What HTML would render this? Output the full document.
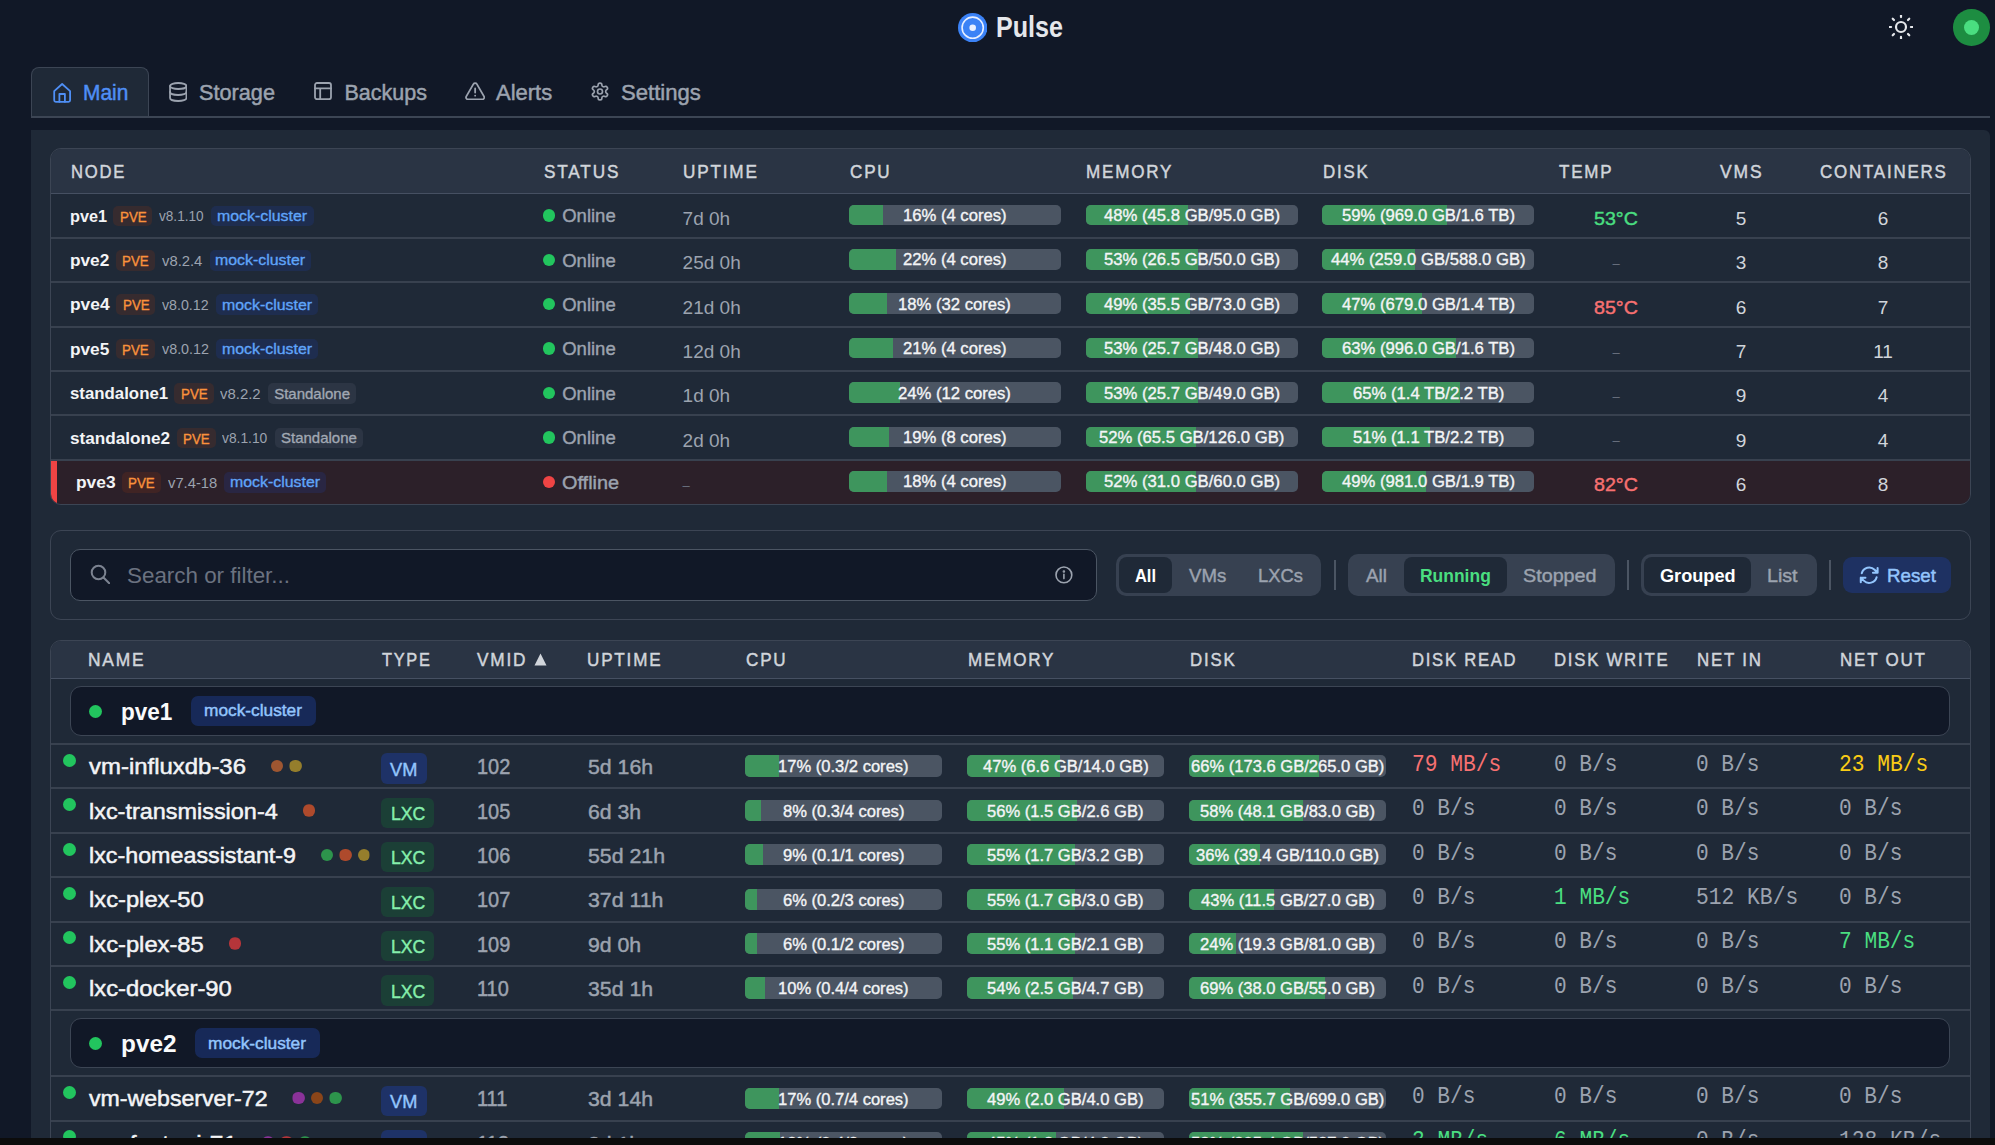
<!DOCTYPE html><html><head><meta charset="utf-8"><style>
html,body{margin:0;padding:0;}body{width:1995px;height:1145px;overflow:hidden;background:#111827;position:relative;font-family:'Liberation Sans', sans-serif;}
.a{position:absolute;}.t{position:absolute;white-space:pre;}
</style></head><body>
<svg class="a" style="left:958.00px;top:13.00px;" width="29.40" height="29.40" viewBox="0 0 29.4 29.4"><circle cx="14.7" cy="14.7" r="14.7" fill="#3b82f6"/><circle cx="14.7" cy="14.7" r="10.6" fill="none" stroke="#e8efff" stroke-width="1.6"/><circle cx="14.7" cy="14.7" r="3.3" fill="#e8efff"/></svg>
<div class="t" style="left:996.00px;top:12.00px;font-size:30px;line-height:30px;color:#e5e7eb;font-weight:bold;font-family:'Liberation Sans', sans-serif;transform:scaleX(0.8371);transform-origin:0 0;">Pulse</div>
<svg class="a" style="left:1888.70px;top:15.30px;" width="24.00" height="24.00" viewBox="0 0 24 24"><g stroke="#e5e7eb" stroke-width="2.2" stroke-linecap="round" fill="none"><circle cx="12" cy="12" r="5"/><line x1="21.90" y1="12.00" x2="23.70" y2="12.00"/><line x1="19.00" y1="19.00" x2="20.27" y2="20.27"/><line x1="12.00" y1="21.90" x2="12.00" y2="23.70"/><line x1="5.00" y1="19.00" x2="3.73" y2="20.27"/><line x1="2.10" y1="12.00" x2="0.30" y2="12.00"/><line x1="5.00" y1="5.00" x2="3.73" y2="3.73"/><line x1="12.00" y1="2.10" x2="12.00" y2="0.30"/><line x1="19.00" y1="5.00" x2="20.27" y2="3.73"/></g></svg>
<div class="a" style="left:1953.05px;top:8.85px;width:36.70px;height:36.70px;border-radius:50%;background:#1d8d41;"></div>
<div class="a" style="left:1963.80px;top:19.60px;width:15.20px;height:15.20px;border-radius:50%;background:#4ade80;"></div>
<div class="a" style="left:31.4px;top:67.4px;width:117.4px;height:50px;background:#1f2937;border:1.5px solid #3c4554;border-bottom:none;border-radius:8px 8px 0 0;box-sizing:border-box;"></div>
<div class="a" style="left:31.40px;top:116.00px;width:1958.40px;height:1.50px;background:#3c4554;"></div>
<div class="a" style="left:31px;top:130px;width:1959px;height:1010px;background:#1f2937;border-radius:0 6px 0 0;"></div>
<svg class="a" style="left:52.80px;top:83.10px;" width="18.30" height="19.90" viewBox="0 0 18.3 19.9"><g fill="none" stroke-width="1.8" stroke-linecap="round" stroke-linejoin="round" stroke="#4f8ff5"><path d="M1.2 8.2 L9.15 1 L17.1 8.2 V17.2 a1.6 1.6 0 0 1 -1.6 1.6 H2.8 a1.6 1.6 0 0 1 -1.6 -1.6 Z"/><path d="M6.4 18.8 V11 H11.9 V18.8"/></g></svg>
<div class="t" style="left:83.13px;top:83.00px;font-size:21.5px;line-height:21.5px;color:#4f8ff5;font-weight:normal;font-family:'Liberation Sans', sans-serif;-webkit-text-stroke:0.47px #4f8ff5;transform:scaleX(0.9706);transform-origin:0 0;">Main</div>
<svg class="a" style="left:168.80px;top:81.70px;" width="18.50" height="20.00" viewBox="0 0 18.5 20"><g fill="none" stroke-width="1.8" stroke-linecap="round" stroke-linejoin="round" stroke="#9ca3af"><ellipse cx="9.25" cy="4" rx="8.2" ry="3"/><path d="M1.05 4 V16 c0 1.7 3.7 3 8.2 3 s8.2 -1.3 8.2 -3 V4"/><path d="M1.05 10 c0 1.7 3.7 3 8.2 3 s8.2 -1.3 8.2 -3"/></g></svg>
<div class="t" style="left:199.14px;top:83.00px;font-size:21.5px;line-height:21.5px;color:#9ca3af;font-weight:normal;font-family:'Liberation Sans', sans-serif;-webkit-text-stroke:0.47px #9ca3af;transform:scaleX(1.0084);transform-origin:0 0;">Storage</div>
<svg class="a" style="left:313.90px;top:82.30px;" width="18.00" height="18.20" viewBox="0 0 18 18.2"><g fill="none" stroke-width="1.8" stroke-linecap="round" stroke-linejoin="round" stroke="#9ca3af"><rect x="1" y="1" width="16" height="16.2" rx="2"/><path d="M1 6.3 H17 M6.2 6.3 V17.2"/></g></svg>
<div class="t" style="left:344.53px;top:83.00px;font-size:21.5px;line-height:21.5px;color:#9ca3af;font-weight:normal;font-family:'Liberation Sans', sans-serif;-webkit-text-stroke:0.47px #9ca3af;">Backups</div>
<svg class="a" style="left:464.70px;top:82.30px;" width="20.30" height="18.20" viewBox="0 0 20.3 18.2"><g fill="none" stroke-width="1.8" stroke-linecap="round" stroke-linejoin="round" stroke="#9ca3af"><path d="M8.4 2.1 a2 2 0 0 1 3.5 0 L19 14.4 a2 2 0 0 1 -1.75 3 H3.05 a2 2 0 0 1 -1.75 -3 Z"/><path d="M10.15 6.5 V10.6 M10.15 13.6 V13.7"/></g></svg>
<div class="t" style="left:495.84px;top:83.00px;font-size:21.5px;line-height:21.5px;color:#9ca3af;font-weight:normal;font-family:'Liberation Sans', sans-serif;-webkit-text-stroke:0.47px #9ca3af;transform:scaleX(1.0230);transform-origin:0 0;">Alerts</div>
<svg class="a" style="left:590.40px;top:80.70px;" width="20.00" height="21.00" viewBox="0 0 24 24"><g fill="none" stroke="#9ca3af" stroke-width="2" stroke-linecap="round" stroke-linejoin="round"><path d="M12.22 2h-.44a2 2 0 0 0-2 2v.18a2 2 0 0 1-1 1.73l-.43.25a2 2 0 0 1-2 0l-.15-.08a2 2 0 0 0-2.73.73l-.22.38a2 2 0 0 0 .73 2.73l.15.1a2 2 0 0 1 1 1.72v.51a2 2 0 0 1-1 1.74l-.15.09a2 2 0 0 0-.73 2.73l.22.38a2 2 0 0 0 2.73.73l.15-.08a2 2 0 0 1 2 0l.43.25a2 2 0 0 1 1 1.73V20a2 2 0 0 0 2 2h.44a2 2 0 0 0 2-2v-.18a2 2 0 0 1 1-1.73l.43-.25a2 2 0 0 1 2 0l.15.08a2 2 0 0 0 2.73-.73l.22-.39a2 2 0 0 0-.73-2.73l-.15-.08a2 2 0 0 1-1-1.74v-.5a2 2 0 0 1 1-1.74l.15-.09a2 2 0 0 0 .73-2.73l-.22-.38a2 2 0 0 0-2.73-.73l-.15.08a2 2 0 0 1-2 0l-.43-.25a2 2 0 0 1-1-1.73V4a2 2 0 0 0-2-2z"/><circle cx="12" cy="12" r="3"/></g></svg>
<div class="t" style="left:621.34px;top:83.00px;font-size:21.5px;line-height:21.5px;color:#9ca3af;font-weight:normal;font-family:'Liberation Sans', sans-serif;-webkit-text-stroke:0.47px #9ca3af;transform:scaleX(1.0275);transform-origin:0 0;">Settings</div>
<div class="a" style="left:50px;top:148.3px;width:1921px;height:356.8px;border:1.5px solid #3c4554;border-radius:11px;box-sizing:border-box;overflow:hidden;background:#1f2937;"><div style="position:absolute;left:0;top:0;right:0;height:43.5px;background:#2a3444;border-bottom:1.5px solid #465062;"></div><div style="position:absolute;left:0;top:309.9px;right:0;bottom:0;background:#2c2029;"></div><div style="position:absolute;left:0;top:309.9px;width:6px;bottom:0;background:#ef4444;"></div></div>
<div class="a" style="left:51.00px;top:236.70px;width:1919.00px;height:2.00px;background:#38414f;"></div>
<div class="a" style="left:51.00px;top:281.10px;width:1919.00px;height:2.00px;background:#38414f;"></div>
<div class="a" style="left:51.00px;top:325.50px;width:1919.00px;height:2.00px;background:#38414f;"></div>
<div class="a" style="left:51.00px;top:369.90px;width:1919.00px;height:2.00px;background:#38414f;"></div>
<div class="a" style="left:51.00px;top:414.30px;width:1919.00px;height:2.00px;background:#38414f;"></div>
<div class="a" style="left:51.00px;top:458.70px;width:1919.00px;height:2.00px;background:#38414f;"></div>
<div class="t" style="left:70.81px;top:162.00px;font-size:19px;line-height:19px;color:#d1d5db;font-weight:normal;font-family:'Liberation Sans', sans-serif;letter-spacing:2.0px;-webkit-text-stroke:0.49px #d1d5db;transform:scaleX(0.8749);transform-origin:0 0;">NODE</div>
<div class="t" style="left:543.72px;top:162.00px;font-size:19px;line-height:19px;color:#d1d5db;font-weight:normal;font-family:'Liberation Sans', sans-serif;letter-spacing:2.0px;-webkit-text-stroke:0.49px #d1d5db;transform:scaleX(0.9054);transform-origin:0 0;">STATUS</div>
<div class="t" style="left:682.62px;top:162.00px;font-size:19px;line-height:19px;color:#d1d5db;font-weight:normal;font-family:'Liberation Sans', sans-serif;letter-spacing:2.0px;-webkit-text-stroke:0.49px #d1d5db;transform:scaleX(0.9031);transform-origin:0 0;">UPTIME</div>
<div class="t" style="left:849.52px;top:162.00px;font-size:19px;line-height:19px;color:#d1d5db;font-weight:normal;font-family:'Liberation Sans', sans-serif;letter-spacing:2.0px;-webkit-text-stroke:0.49px #d1d5db;transform:scaleX(0.8991);transform-origin:0 0;">CPU</div>
<div class="t" style="left:1086.22px;top:162.00px;font-size:19px;line-height:19px;color:#d1d5db;font-weight:normal;font-family:'Liberation Sans', sans-serif;letter-spacing:2.0px;-webkit-text-stroke:0.49px #d1d5db;transform:scaleX(0.8981);transform-origin:0 0;">MEMORY</div>
<div class="t" style="left:1322.72px;top:162.00px;font-size:19px;line-height:19px;color:#d1d5db;font-weight:normal;font-family:'Liberation Sans', sans-serif;letter-spacing:2.0px;-webkit-text-stroke:0.49px #d1d5db;transform:scaleX(0.8911);transform-origin:0 0;">DISK</div>
<div class="t" style="left:1559.22px;top:162.00px;font-size:19px;line-height:19px;color:#d1d5db;font-weight:normal;font-family:'Liberation Sans', sans-serif;letter-spacing:2.0px;-webkit-text-stroke:0.49px #d1d5db;transform:scaleX(0.8942);transform-origin:0 0;">TEMP</div>
<div class="t" style="left:1719.73px;top:162.00px;font-size:19px;line-height:19px;color:#d1d5db;font-weight:normal;font-family:'Liberation Sans', sans-serif;letter-spacing:2.0px;-webkit-text-stroke:0.49px #d1d5db;transform:scaleX(0.9198);transform-origin:0 0;">VMS</div>
<div class="t" style="left:1819.62px;top:162.00px;font-size:19px;line-height:19px;color:#d1d5db;font-weight:normal;font-family:'Liberation Sans', sans-serif;letter-spacing:2.0px;-webkit-text-stroke:0.49px #d1d5db;transform:scaleX(0.8916);transform-origin:0 0;">CONTAINERS</div>
<div class="t" style="left:69.60px;top:208.00px;font-size:16.5px;line-height:16.5px;color:#f3f4f6;font-weight:bold;font-family:'Liberation Sans', sans-serif;transform:scaleX(0.9840);transform-origin:0 0;">pve1</div>
<div class="a" style="left:113.30px;top:205.50px;width:39.20px;height:20.70px;background:rgba(154,52,18,0.19);border-radius:5px;"></div>
<div class="t" style="left:119.57px;top:210.00px;font-size:14px;line-height:14px;color:#fb923c;font-weight:normal;font-family:'Liberation Sans', sans-serif;-webkit-text-stroke:0.36px #fb923c;transform:scaleX(0.9516);transform-origin:0 0;">PVE</div>
<div class="t" style="left:159.30px;top:209.00px;font-size:14.5px;line-height:14.5px;color:#9ca3af;font-weight:normal;font-family:'Liberation Sans', sans-serif;transform:scaleX(0.9378);transform-origin:0 0;">v8.1.10</div>
<div class="a" style="left:211.30px;top:205.50px;width:102.40px;height:20.70px;background:rgba(30,64,175,0.2);border-radius:5px;"></div>
<div class="t" style="left:217.47px;top:208.00px;font-size:15px;line-height:15px;color:#60a5fa;font-weight:normal;font-family:'Liberation Sans', sans-serif;-webkit-text-stroke:0.33px #60a5fa;transform:scaleX(1.0592);transform-origin:0 0;">mock-cluster</div>
<div class="a" style="left:542.85px;top:209.15px;width:12.50px;height:12.50px;border-radius:50%;background:#22c55e;"></div>
<div class="t" style="left:562.21px;top:207.00px;font-size:18.5px;line-height:18.5px;color:#9ca3af;font-weight:normal;font-family:'Liberation Sans', sans-serif;-webkit-text-stroke:0.41px #9ca3af;">Online</div>
<div class="t" style="left:682.60px;top:209.00px;font-size:19px;line-height:19px;color:#9ca3af;font-weight:normal;font-family:'Liberation Sans', sans-serif;">7d 0h</div>
<div class="a" style="left:849.00px;top:204.50px;width:211.80px;height:20.70px;background:#4b5563;border-radius:5px;overflow:hidden;"><div style="width:16%;height:100%;background:#3e955d;"></div></div>
<div class="t" style="left:903.08px;top:208.00px;font-size:16px;line-height:16px;color:#f3f4f6;font-weight:normal;font-family:'Liberation Sans', sans-serif;-webkit-text-stroke:0.35px #f3f4f6;transform:scaleX(1.0405);transform-origin:0 0;">16% (4 cores)</div>
<div class="a" style="left:1086.00px;top:204.50px;width:211.60px;height:20.70px;background:#4b5563;border-radius:5px;overflow:hidden;"><div style="width:48%;height:100%;background:#3e955d;"></div></div>
<div class="t" style="left:1103.76px;top:208.00px;font-size:16px;line-height:16px;color:#f3f4f6;font-weight:normal;font-family:'Liberation Sans', sans-serif;-webkit-text-stroke:0.35px #f3f4f6;transform:scaleX(1.0420);transform-origin:0 0;">48% (45.8 GB/95.0 GB)</div>
<div class="a" style="left:1322.40px;top:204.50px;width:211.60px;height:20.70px;background:#4b5563;border-radius:5px;overflow:hidden;"><div style="width:59%;height:100%;background:#3e955d;"></div></div>
<div class="t" style="left:1341.71px;top:208.00px;font-size:16px;line-height:16px;color:#f3f4f6;font-weight:normal;font-family:'Liberation Sans', sans-serif;-webkit-text-stroke:0.35px #f3f4f6;transform:scaleX(1.0420);transform-origin:0 0;">59% (969.0 GB/1.6 TB)</div>
<div class="t" style="left:1594.07px;top:209.00px;font-size:19px;line-height:19px;color:#4ade80;font-weight:normal;font-family:'Liberation Sans', sans-serif;-webkit-text-stroke:0.42px #4ade80;transform:scaleX(1.0335);transform-origin:0 0;">53°C</div>
<div class="t" style="left:1735.72px;top:209.00px;font-size:19px;line-height:19px;color:#d1d5db;font-weight:normal;font-family:'Liberation Sans', sans-serif;">5</div>
<div class="t" style="left:1877.72px;top:209.00px;font-size:19px;line-height:19px;color:#d1d5db;font-weight:normal;font-family:'Liberation Sans', sans-serif;">6</div>
<div class="t" style="left:69.60px;top:252.00px;font-size:16.5px;line-height:16.5px;color:#f3f4f6;font-weight:bold;font-family:'Liberation Sans', sans-serif;transform:scaleX(1.0451);transform-origin:0 0;">pve2</div>
<div class="a" style="left:115.60px;top:249.90px;width:39.20px;height:20.70px;background:rgba(154,52,18,0.19);border-radius:5px;"></div>
<div class="t" style="left:121.87px;top:254.00px;font-size:14px;line-height:14px;color:#fb923c;font-weight:normal;font-family:'Liberation Sans', sans-serif;-webkit-text-stroke:0.36px #fb923c;transform:scaleX(0.9516);transform-origin:0 0;">PVE</div>
<div class="t" style="left:161.60px;top:254.00px;font-size:14.5px;line-height:14.5px;color:#9ca3af;font-weight:normal;font-family:'Liberation Sans', sans-serif;transform:scaleX(1.0203);transform-origin:0 0;">v8.2.4</div>
<div class="a" style="left:209.60px;top:249.90px;width:101.80px;height:20.70px;background:rgba(30,64,175,0.2);border-radius:5px;"></div>
<div class="t" style="left:215.47px;top:252.00px;font-size:15px;line-height:15px;color:#60a5fa;font-weight:normal;font-family:'Liberation Sans', sans-serif;-webkit-text-stroke:0.33px #60a5fa;transform:scaleX(1.0592);transform-origin:0 0;">mock-cluster</div>
<div class="a" style="left:542.85px;top:253.55px;width:12.50px;height:12.50px;border-radius:50%;background:#22c55e;"></div>
<div class="t" style="left:562.21px;top:252.00px;font-size:18.5px;line-height:18.5px;color:#9ca3af;font-weight:normal;font-family:'Liberation Sans', sans-serif;-webkit-text-stroke:0.41px #9ca3af;">Online</div>
<div class="t" style="left:682.60px;top:253.00px;font-size:19px;line-height:19px;color:#9ca3af;font-weight:normal;font-family:'Liberation Sans', sans-serif;">25d 0h</div>
<div class="a" style="left:849.00px;top:248.90px;width:211.80px;height:20.70px;background:#4b5563;border-radius:5px;overflow:hidden;"><div style="width:22%;height:100%;background:#3e955d;"></div></div>
<div class="t" style="left:903.08px;top:252.00px;font-size:16px;line-height:16px;color:#f3f4f6;font-weight:normal;font-family:'Liberation Sans', sans-serif;-webkit-text-stroke:0.35px #f3f4f6;transform:scaleX(1.0405);transform-origin:0 0;">22% (4 cores)</div>
<div class="a" style="left:1086.00px;top:248.90px;width:211.60px;height:20.70px;background:#4b5563;border-radius:5px;overflow:hidden;"><div style="width:53%;height:100%;background:#3e955d;"></div></div>
<div class="t" style="left:1103.76px;top:252.00px;font-size:16px;line-height:16px;color:#f3f4f6;font-weight:normal;font-family:'Liberation Sans', sans-serif;-webkit-text-stroke:0.35px #f3f4f6;transform:scaleX(1.0420);transform-origin:0 0;">53% (26.5 GB/50.0 GB)</div>
<div class="a" style="left:1322.40px;top:248.90px;width:211.60px;height:20.70px;background:#4b5563;border-radius:5px;overflow:hidden;"><div style="width:44%;height:100%;background:#3e955d;"></div></div>
<div class="t" style="left:1330.87px;top:252.00px;font-size:16px;line-height:16px;color:#f3f4f6;font-weight:normal;font-family:'Liberation Sans', sans-serif;-webkit-text-stroke:0.35px #f3f4f6;transform:scaleX(1.0422);transform-origin:0 0;">44% (259.0 GB/588.0 GB)</div>
<div class="t" style="left:1612.39px;top:257.00px;font-size:13px;line-height:13px;color:#6b7280;font-weight:normal;font-family:'Liberation Sans', sans-serif;">–</div>
<div class="t" style="left:1735.72px;top:253.00px;font-size:19px;line-height:19px;color:#d1d5db;font-weight:normal;font-family:'Liberation Sans', sans-serif;">3</div>
<div class="t" style="left:1877.72px;top:253.00px;font-size:19px;line-height:19px;color:#d1d5db;font-weight:normal;font-family:'Liberation Sans', sans-serif;">8</div>
<div class="t" style="left:69.60px;top:296.00px;font-size:16.5px;line-height:16.5px;color:#f3f4f6;font-weight:bold;font-family:'Liberation Sans', sans-serif;transform:scaleX(1.0531);transform-origin:0 0;">pve4</div>
<div class="a" style="left:116.30px;top:294.30px;width:39.20px;height:20.70px;background:rgba(154,52,18,0.19);border-radius:5px;"></div>
<div class="t" style="left:122.57px;top:298.00px;font-size:14px;line-height:14px;color:#fb923c;font-weight:normal;font-family:'Liberation Sans', sans-serif;-webkit-text-stroke:0.36px #fb923c;transform:scaleX(0.9516);transform-origin:0 0;">PVE</div>
<div class="t" style="left:162.00px;top:298.00px;font-size:14.5px;line-height:14.5px;color:#9ca3af;font-weight:normal;font-family:'Liberation Sans', sans-serif;transform:scaleX(0.9798);transform-origin:0 0;">v8.0.12</div>
<div class="a" style="left:215.70px;top:294.30px;width:102.40px;height:20.70px;background:rgba(30,64,175,0.2);border-radius:5px;"></div>
<div class="t" style="left:221.87px;top:297.00px;font-size:15px;line-height:15px;color:#60a5fa;font-weight:normal;font-family:'Liberation Sans', sans-serif;-webkit-text-stroke:0.33px #60a5fa;transform:scaleX(1.0592);transform-origin:0 0;">mock-cluster</div>
<div class="a" style="left:542.85px;top:297.95px;width:12.50px;height:12.50px;border-radius:50%;background:#22c55e;"></div>
<div class="t" style="left:562.21px;top:296.00px;font-size:18.5px;line-height:18.5px;color:#9ca3af;font-weight:normal;font-family:'Liberation Sans', sans-serif;-webkit-text-stroke:0.41px #9ca3af;">Online</div>
<div class="t" style="left:682.60px;top:298.00px;font-size:19px;line-height:19px;color:#9ca3af;font-weight:normal;font-family:'Liberation Sans', sans-serif;">21d 0h</div>
<div class="a" style="left:849.00px;top:293.30px;width:211.80px;height:20.70px;background:#4b5563;border-radius:5px;overflow:hidden;"><div style="width:18%;height:100%;background:#3e955d;"></div></div>
<div class="t" style="left:898.44px;top:297.00px;font-size:16px;line-height:16px;color:#f3f4f6;font-weight:normal;font-family:'Liberation Sans', sans-serif;-webkit-text-stroke:0.35px #f3f4f6;transform:scaleX(1.0408);transform-origin:0 0;">18% (32 cores)</div>
<div class="a" style="left:1086.00px;top:293.30px;width:211.60px;height:20.70px;background:#4b5563;border-radius:5px;overflow:hidden;"><div style="width:49%;height:100%;background:#3e955d;"></div></div>
<div class="t" style="left:1103.76px;top:297.00px;font-size:16px;line-height:16px;color:#f3f4f6;font-weight:normal;font-family:'Liberation Sans', sans-serif;-webkit-text-stroke:0.35px #f3f4f6;transform:scaleX(1.0420);transform-origin:0 0;">49% (35.5 GB/73.0 GB)</div>
<div class="a" style="left:1322.40px;top:293.30px;width:211.60px;height:20.70px;background:#4b5563;border-radius:5px;overflow:hidden;"><div style="width:47%;height:100%;background:#3e955d;"></div></div>
<div class="t" style="left:1341.71px;top:297.00px;font-size:16px;line-height:16px;color:#f3f4f6;font-weight:normal;font-family:'Liberation Sans', sans-serif;-webkit-text-stroke:0.35px #f3f4f6;transform:scaleX(1.0420);transform-origin:0 0;">47% (679.0 GB/1.4 TB)</div>
<div class="t" style="left:1594.07px;top:298.00px;font-size:19px;line-height:19px;color:#f87171;font-weight:normal;font-family:'Liberation Sans', sans-serif;-webkit-text-stroke:0.42px #f87171;transform:scaleX(1.0335);transform-origin:0 0;">85°C</div>
<div class="t" style="left:1735.72px;top:298.00px;font-size:19px;line-height:19px;color:#d1d5db;font-weight:normal;font-family:'Liberation Sans', sans-serif;">6</div>
<div class="t" style="left:1877.72px;top:298.00px;font-size:19px;line-height:19px;color:#d1d5db;font-weight:normal;font-family:'Liberation Sans', sans-serif;">7</div>
<div class="t" style="left:69.60px;top:341.00px;font-size:16.5px;line-height:16.5px;color:#f3f4f6;font-weight:bold;font-family:'Liberation Sans', sans-serif;transform:scaleX(1.0451);transform-origin:0 0;">pve5</div>
<div class="a" style="left:115.60px;top:338.70px;width:39.20px;height:20.70px;background:rgba(154,52,18,0.19);border-radius:5px;"></div>
<div class="t" style="left:121.87px;top:343.00px;font-size:14px;line-height:14px;color:#fb923c;font-weight:normal;font-family:'Liberation Sans', sans-serif;-webkit-text-stroke:0.36px #fb923c;transform:scaleX(0.9516);transform-origin:0 0;">PVE</div>
<div class="t" style="left:161.60px;top:342.00px;font-size:14.5px;line-height:14.5px;color:#9ca3af;font-weight:normal;font-family:'Liberation Sans', sans-serif;transform:scaleX(0.9882);transform-origin:0 0;">v8.0.12</div>
<div class="a" style="left:215.70px;top:338.70px;width:102.10px;height:20.70px;background:rgba(30,64,175,0.2);border-radius:5px;"></div>
<div class="t" style="left:221.72px;top:341.00px;font-size:15px;line-height:15px;color:#60a5fa;font-weight:normal;font-family:'Liberation Sans', sans-serif;-webkit-text-stroke:0.33px #60a5fa;transform:scaleX(1.0592);transform-origin:0 0;">mock-cluster</div>
<div class="a" style="left:542.85px;top:342.35px;width:12.50px;height:12.50px;border-radius:50%;background:#22c55e;"></div>
<div class="t" style="left:562.21px;top:340.00px;font-size:18.5px;line-height:18.5px;color:#9ca3af;font-weight:normal;font-family:'Liberation Sans', sans-serif;-webkit-text-stroke:0.41px #9ca3af;">Online</div>
<div class="t" style="left:682.60px;top:342.00px;font-size:19px;line-height:19px;color:#9ca3af;font-weight:normal;font-family:'Liberation Sans', sans-serif;">12d 0h</div>
<div class="a" style="left:849.00px;top:337.70px;width:211.80px;height:20.70px;background:#4b5563;border-radius:5px;overflow:hidden;"><div style="width:21%;height:100%;background:#3e955d;"></div></div>
<div class="t" style="left:903.08px;top:341.00px;font-size:16px;line-height:16px;color:#f3f4f6;font-weight:normal;font-family:'Liberation Sans', sans-serif;-webkit-text-stroke:0.35px #f3f4f6;transform:scaleX(1.0405);transform-origin:0 0;">21% (4 cores)</div>
<div class="a" style="left:1086.00px;top:337.70px;width:211.60px;height:20.70px;background:#4b5563;border-radius:5px;overflow:hidden;"><div style="width:53%;height:100%;background:#3e955d;"></div></div>
<div class="t" style="left:1103.76px;top:341.00px;font-size:16px;line-height:16px;color:#f3f4f6;font-weight:normal;font-family:'Liberation Sans', sans-serif;-webkit-text-stroke:0.35px #f3f4f6;transform:scaleX(1.0420);transform-origin:0 0;">53% (25.7 GB/48.0 GB)</div>
<div class="a" style="left:1322.40px;top:337.70px;width:211.60px;height:20.70px;background:#4b5563;border-radius:5px;overflow:hidden;"><div style="width:63%;height:100%;background:#3e955d;"></div></div>
<div class="t" style="left:1341.71px;top:341.00px;font-size:16px;line-height:16px;color:#f3f4f6;font-weight:normal;font-family:'Liberation Sans', sans-serif;-webkit-text-stroke:0.35px #f3f4f6;transform:scaleX(1.0420);transform-origin:0 0;">63% (996.0 GB/1.6 TB)</div>
<div class="t" style="left:1612.39px;top:346.00px;font-size:13px;line-height:13px;color:#6b7280;font-weight:normal;font-family:'Liberation Sans', sans-serif;">–</div>
<div class="t" style="left:1735.72px;top:342.00px;font-size:19px;line-height:19px;color:#d1d5db;font-weight:normal;font-family:'Liberation Sans', sans-serif;">7</div>
<div class="t" style="left:1873.14px;top:342.00px;font-size:19px;line-height:19px;color:#d1d5db;font-weight:normal;font-family:'Liberation Sans', sans-serif;">11</div>
<div class="t" style="left:69.60px;top:385.00px;font-size:16.5px;line-height:16.5px;color:#f3f4f6;font-weight:bold;font-family:'Liberation Sans', sans-serif;transform:scaleX(1.0189);transform-origin:0 0;">standalone1</div>
<div class="a" style="left:174.40px;top:383.10px;width:39.20px;height:20.70px;background:rgba(154,52,18,0.19);border-radius:5px;"></div>
<div class="t" style="left:180.67px;top:387.00px;font-size:14px;line-height:14px;color:#fb923c;font-weight:normal;font-family:'Liberation Sans', sans-serif;-webkit-text-stroke:0.36px #fb923c;transform:scaleX(0.9516);transform-origin:0 0;">PVE</div>
<div class="t" style="left:220.40px;top:387.00px;font-size:14.5px;line-height:14.5px;color:#9ca3af;font-weight:normal;font-family:'Liberation Sans', sans-serif;transform:scaleX(1.0279);transform-origin:0 0;">v8.2.2</div>
<div class="a" style="left:267.70px;top:383.10px;width:88.70px;height:20.70px;background:#2c3544;border-radius:5px;"></div>
<div class="t" style="left:274.16px;top:386.00px;font-size:15px;line-height:15px;color:#a1a8b3;font-weight:normal;font-family:'Liberation Sans', sans-serif;-webkit-text-stroke:0.33px #a1a8b3;">Standalone</div>
<div class="a" style="left:542.85px;top:386.75px;width:12.50px;height:12.50px;border-radius:50%;background:#22c55e;"></div>
<div class="t" style="left:562.21px;top:385.00px;font-size:18.5px;line-height:18.5px;color:#9ca3af;font-weight:normal;font-family:'Liberation Sans', sans-serif;-webkit-text-stroke:0.41px #9ca3af;">Online</div>
<div class="t" style="left:682.60px;top:386.00px;font-size:19px;line-height:19px;color:#9ca3af;font-weight:normal;font-family:'Liberation Sans', sans-serif;">1d 0h</div>
<div class="a" style="left:849.00px;top:382.10px;width:211.80px;height:20.70px;background:#4b5563;border-radius:5px;overflow:hidden;"><div style="width:24%;height:100%;background:#3e955d;"></div></div>
<div class="t" style="left:898.44px;top:386.00px;font-size:16px;line-height:16px;color:#f3f4f6;font-weight:normal;font-family:'Liberation Sans', sans-serif;-webkit-text-stroke:0.35px #f3f4f6;transform:scaleX(1.0408);transform-origin:0 0;">24% (12 cores)</div>
<div class="a" style="left:1086.00px;top:382.10px;width:211.60px;height:20.70px;background:#4b5563;border-radius:5px;overflow:hidden;"><div style="width:53%;height:100%;background:#3e955d;"></div></div>
<div class="t" style="left:1103.76px;top:386.00px;font-size:16px;line-height:16px;color:#f3f4f6;font-weight:normal;font-family:'Liberation Sans', sans-serif;-webkit-text-stroke:0.35px #f3f4f6;transform:scaleX(1.0420);transform-origin:0 0;">53% (25.7 GB/49.0 GB)</div>
<div class="a" style="left:1322.40px;top:382.10px;width:211.60px;height:20.70px;background:#4b5563;border-radius:5px;overflow:hidden;"><div style="width:65%;height:100%;background:#3e955d;"></div></div>
<div class="t" style="left:1352.54px;top:386.00px;font-size:16px;line-height:16px;color:#f3f4f6;font-weight:normal;font-family:'Liberation Sans', sans-serif;-webkit-text-stroke:0.35px #f3f4f6;transform:scaleX(1.0417);transform-origin:0 0;">65% (1.4 TB/2.2 TB)</div>
<div class="t" style="left:1612.39px;top:390.00px;font-size:13px;line-height:13px;color:#6b7280;font-weight:normal;font-family:'Liberation Sans', sans-serif;">–</div>
<div class="t" style="left:1735.72px;top:386.00px;font-size:19px;line-height:19px;color:#d1d5db;font-weight:normal;font-family:'Liberation Sans', sans-serif;">9</div>
<div class="t" style="left:1877.72px;top:386.00px;font-size:19px;line-height:19px;color:#d1d5db;font-weight:normal;font-family:'Liberation Sans', sans-serif;">4</div>
<div class="t" style="left:69.60px;top:430.00px;font-size:16.5px;line-height:16.5px;color:#f3f4f6;font-weight:bold;font-family:'Liberation Sans', sans-serif;transform:scaleX(1.0397);transform-origin:0 0;">standalone2</div>
<div class="a" style="left:176.70px;top:427.50px;width:39.20px;height:20.70px;background:rgba(154,52,18,0.19);border-radius:5px;"></div>
<div class="t" style="left:182.97px;top:432.00px;font-size:14px;line-height:14px;color:#fb923c;font-weight:normal;font-family:'Liberation Sans', sans-serif;-webkit-text-stroke:0.36px #fb923c;transform:scaleX(0.9516);transform-origin:0 0;">PVE</div>
<div class="t" style="left:222.40px;top:431.00px;font-size:14.5px;line-height:14.5px;color:#9ca3af;font-weight:normal;font-family:'Liberation Sans', sans-serif;transform:scaleX(0.9525);transform-origin:0 0;">v8.1.10</div>
<div class="a" style="left:274.50px;top:427.50px;width:88.90px;height:20.70px;background:#2c3544;border-radius:5px;"></div>
<div class="t" style="left:280.97px;top:430.00px;font-size:15px;line-height:15px;color:#a1a8b3;font-weight:normal;font-family:'Liberation Sans', sans-serif;-webkit-text-stroke:0.33px #a1a8b3;">Standalone</div>
<div class="a" style="left:542.85px;top:431.15px;width:12.50px;height:12.50px;border-radius:50%;background:#22c55e;"></div>
<div class="t" style="left:562.21px;top:429.00px;font-size:18.5px;line-height:18.5px;color:#9ca3af;font-weight:normal;font-family:'Liberation Sans', sans-serif;-webkit-text-stroke:0.41px #9ca3af;">Online</div>
<div class="t" style="left:682.60px;top:431.00px;font-size:19px;line-height:19px;color:#9ca3af;font-weight:normal;font-family:'Liberation Sans', sans-serif;">2d 0h</div>
<div class="a" style="left:849.00px;top:426.50px;width:211.80px;height:20.70px;background:#4b5563;border-radius:5px;overflow:hidden;"><div style="width:19%;height:100%;background:#3e955d;"></div></div>
<div class="t" style="left:903.08px;top:430.00px;font-size:16px;line-height:16px;color:#f3f4f6;font-weight:normal;font-family:'Liberation Sans', sans-serif;-webkit-text-stroke:0.35px #f3f4f6;transform:scaleX(1.0405);transform-origin:0 0;">19% (8 cores)</div>
<div class="a" style="left:1086.00px;top:426.50px;width:211.60px;height:20.70px;background:#4b5563;border-radius:5px;overflow:hidden;"><div style="width:52%;height:100%;background:#3e955d;"></div></div>
<div class="t" style="left:1099.12px;top:430.00px;font-size:16px;line-height:16px;color:#f3f4f6;font-weight:normal;font-family:'Liberation Sans', sans-serif;-webkit-text-stroke:0.35px #f3f4f6;transform:scaleX(1.0421);transform-origin:0 0;">52% (65.5 GB/126.0 GB)</div>
<div class="a" style="left:1322.40px;top:426.50px;width:211.60px;height:20.70px;background:#4b5563;border-radius:5px;overflow:hidden;"><div style="width:51%;height:100%;background:#3e955d;"></div></div>
<div class="t" style="left:1352.54px;top:430.00px;font-size:16px;line-height:16px;color:#f3f4f6;font-weight:normal;font-family:'Liberation Sans', sans-serif;-webkit-text-stroke:0.35px #f3f4f6;transform:scaleX(1.0417);transform-origin:0 0;">51% (1.1 TB/2.2 TB)</div>
<div class="t" style="left:1612.39px;top:434.00px;font-size:13px;line-height:13px;color:#6b7280;font-weight:normal;font-family:'Liberation Sans', sans-serif;">–</div>
<div class="t" style="left:1735.72px;top:431.00px;font-size:19px;line-height:19px;color:#d1d5db;font-weight:normal;font-family:'Liberation Sans', sans-serif;">9</div>
<div class="t" style="left:1877.72px;top:431.00px;font-size:19px;line-height:19px;color:#d1d5db;font-weight:normal;font-family:'Liberation Sans', sans-serif;">4</div>
<div class="t" style="left:75.70px;top:474.00px;font-size:16.5px;line-height:16.5px;color:#f3f4f6;font-weight:bold;font-family:'Liberation Sans', sans-serif;transform:scaleX(1.0531);transform-origin:0 0;">pve3</div>
<div class="a" style="left:121.70px;top:471.90px;width:39.20px;height:20.70px;background:rgba(154,52,18,0.19);border-radius:5px;"></div>
<div class="t" style="left:127.97px;top:476.00px;font-size:14px;line-height:14px;color:#fb923c;font-weight:normal;font-family:'Liberation Sans', sans-serif;-webkit-text-stroke:0.36px #fb923c;transform:scaleX(0.9516);transform-origin:0 0;">PVE</div>
<div class="t" style="left:167.70px;top:476.00px;font-size:14.5px;line-height:14.5px;color:#9ca3af;font-weight:normal;font-family:'Liberation Sans', sans-serif;transform:scaleX(1.0195);transform-origin:0 0;">v7.4-18</div>
<div class="a" style="left:224.10px;top:471.90px;width:102.10px;height:20.70px;background:rgba(30,64,175,0.2);border-radius:5px;"></div>
<div class="t" style="left:230.12px;top:474.00px;font-size:15px;line-height:15px;color:#60a5fa;font-weight:normal;font-family:'Liberation Sans', sans-serif;-webkit-text-stroke:0.33px #60a5fa;transform:scaleX(1.0592);transform-origin:0 0;">mock-cluster</div>
<div class="a" style="left:542.85px;top:475.55px;width:12.50px;height:12.50px;border-radius:50%;background:#ef4444;"></div>
<div class="t" style="left:562.22px;top:474.00px;font-size:18.5px;line-height:18.5px;color:#9ca3af;font-weight:normal;font-family:'Liberation Sans', sans-serif;-webkit-text-stroke:0.41px #9ca3af;transform:scaleX(1.0739);transform-origin:0 0;">Offline</div>
<div class="t" style="left:682.60px;top:479.00px;font-size:13px;line-height:13px;color:#6b7280;font-weight:normal;font-family:'Liberation Sans', sans-serif;">–</div>
<div class="a" style="left:849.00px;top:470.90px;width:211.80px;height:20.70px;background:#4b5563;border-radius:5px;overflow:hidden;"><div style="width:18%;height:100%;background:#3e955d;"></div></div>
<div class="t" style="left:903.08px;top:474.00px;font-size:16px;line-height:16px;color:#f3f4f6;font-weight:normal;font-family:'Liberation Sans', sans-serif;-webkit-text-stroke:0.35px #f3f4f6;transform:scaleX(1.0405);transform-origin:0 0;">18% (4 cores)</div>
<div class="a" style="left:1086.00px;top:470.90px;width:211.60px;height:20.70px;background:#4b5563;border-radius:5px;overflow:hidden;"><div style="width:52%;height:100%;background:#3e955d;"></div></div>
<div class="t" style="left:1103.76px;top:474.00px;font-size:16px;line-height:16px;color:#f3f4f6;font-weight:normal;font-family:'Liberation Sans', sans-serif;-webkit-text-stroke:0.35px #f3f4f6;transform:scaleX(1.0420);transform-origin:0 0;">52% (31.0 GB/60.0 GB)</div>
<div class="a" style="left:1322.40px;top:470.90px;width:211.60px;height:20.70px;background:#4b5563;border-radius:5px;overflow:hidden;"><div style="width:49%;height:100%;background:#3e955d;"></div></div>
<div class="t" style="left:1341.71px;top:474.00px;font-size:16px;line-height:16px;color:#f3f4f6;font-weight:normal;font-family:'Liberation Sans', sans-serif;-webkit-text-stroke:0.35px #f3f4f6;transform:scaleX(1.0420);transform-origin:0 0;">49% (981.0 GB/1.9 TB)</div>
<div class="t" style="left:1594.07px;top:475.00px;font-size:19px;line-height:19px;color:#f87171;font-weight:normal;font-family:'Liberation Sans', sans-serif;-webkit-text-stroke:0.42px #f87171;transform:scaleX(1.0335);transform-origin:0 0;">82°C</div>
<div class="t" style="left:1735.72px;top:475.00px;font-size:19px;line-height:19px;color:#d1d5db;font-weight:normal;font-family:'Liberation Sans', sans-serif;">6</div>
<div class="t" style="left:1877.72px;top:475.00px;font-size:19px;line-height:19px;color:#d1d5db;font-weight:normal;font-family:'Liberation Sans', sans-serif;">8</div>
<div class="a" style="left:50px;top:529.6px;width:1921px;height:90.7px;border:1.5px solid #3c4554;border-radius:11px;box-sizing:border-box;"></div>
<div class="a" style="left:69.8px;top:549.4px;width:1027.3px;height:51.2px;background:#111827;border:1.5px solid #4b5563;border-radius:10px;box-sizing:border-box;"></div>
<svg class="a" style="left:89.70px;top:563.50px;" width="20.50" height="20.50" viewBox="0 0 20.5 20.5"><g fill="none" stroke="#7c8391" stroke-width="2" stroke-linecap="round"><circle cx="8.5" cy="8.5" r="6.8"/><path d="M13.5 13.5 L19.2 19.2"/></g></svg>
<div class="t" style="left:127.10px;top:565.00px;font-size:22px;line-height:22px;color:#6b7280;font-weight:normal;font-family:'Liberation Sans', sans-serif;transform:scaleX(1.0176);transform-origin:0 0;">Search or filter...</div>
<svg class="a" style="left:1054.90px;top:566.00px;" width="17.80" height="17.80" viewBox="0 0 17.8 17.8"><g fill="none" stroke="#9ca3af" stroke-width="1.6" stroke-linecap="round"><circle cx="8.9" cy="8.9" r="7.9"/><path d="M8.9 8.4 V12.6"/><circle cx="8.9" cy="5.5" r="0.5" fill="#9ca3af"/></g></svg>
<div class="a" style="left:1116.40px;top:553.50px;width:205.10px;height:42.50px;background:#374151;border-radius:10px;"></div>
<div class="a" style="left:1119.00px;top:556.80px;width:53.30px;height:36.20px;background:#1f2937;border-radius:8px;"></div>
<div class="t" style="left:1135.00px;top:566.00px;font-size:19px;line-height:19px;color:#ffffff;font-weight:bold;font-family:'Liberation Sans', sans-serif;transform:scaleX(0.8648);transform-origin:0 0;">All</div>
<div class="t" style="left:1188.81px;top:566.00px;font-size:19px;line-height:19px;color:#9ca3af;font-weight:normal;font-family:'Liberation Sans', sans-serif;-webkit-text-stroke:0.42px #9ca3af;transform:scaleX(0.9787);transform-origin:0 0;">VMs</div>
<div class="t" style="left:1257.90px;top:566.00px;font-size:19px;line-height:19px;color:#9ca3af;font-weight:normal;font-family:'Liberation Sans', sans-serif;-webkit-text-stroke:0.42px #9ca3af;transform:scaleX(0.9643);transform-origin:0 0;">LXCs</div>
<div class="a" style="left:1334.10px;top:559.50px;width:1.50px;height:30.90px;background:#4b5563;"></div>
<div class="a" style="left:1348.00px;top:553.50px;width:266.70px;height:42.50px;background:#374151;border-radius:10px;"></div>
<div class="a" style="left:1404.00px;top:556.80px;width:102.70px;height:36.20px;background:#1f2937;border-radius:8px;"></div>
<div class="t" style="left:1366.31px;top:566.00px;font-size:19px;line-height:19px;color:#9ca3af;font-weight:normal;font-family:'Liberation Sans', sans-serif;-webkit-text-stroke:0.42px #9ca3af;transform:scaleX(0.9894);transform-origin:0 0;">All</div>
<div class="t" style="left:1419.80px;top:566.00px;font-size:19px;line-height:19px;color:#4ade80;font-weight:bold;font-family:'Liberation Sans', sans-serif;transform:scaleX(0.9192);transform-origin:0 0;">Running</div>
<div class="t" style="left:1522.72px;top:566.00px;font-size:19px;line-height:19px;color:#9ca3af;font-weight:normal;font-family:'Liberation Sans', sans-serif;-webkit-text-stroke:0.42px #9ca3af;transform:scaleX(1.0391);transform-origin:0 0;">Stopped</div>
<div class="a" style="left:1627.00px;top:559.50px;width:1.50px;height:30.90px;background:#4b5563;"></div>
<div class="a" style="left:1641.00px;top:553.50px;width:175.80px;height:42.50px;background:#374151;border-radius:10px;"></div>
<div class="a" style="left:1644.00px;top:556.80px;width:107.00px;height:36.20px;background:#1f2937;border-radius:8px;"></div>
<div class="t" style="left:1660.00px;top:566.00px;font-size:19px;line-height:19px;color:#ffffff;font-weight:bold;font-family:'Liberation Sans', sans-serif;transform:scaleX(0.9549);transform-origin:0 0;">Grouped</div>
<div class="t" style="left:1767.42px;top:566.00px;font-size:19px;line-height:19px;color:#9ca3af;font-weight:normal;font-family:'Liberation Sans', sans-serif;-webkit-text-stroke:0.42px #9ca3af;transform:scaleX(1.0339);transform-origin:0 0;">List</div>
<div class="a" style="left:1829.00px;top:559.50px;width:1.50px;height:30.90px;background:#4b5563;"></div>
<div class="a" style="left:1843.10px;top:556.90px;width:107.70px;height:36.10px;background:rgba(30,64,175,0.36);border-radius:9px;"></div>
<svg class="a" style="left:1857.60px;top:563.80px;" width="22.40" height="22.40" viewBox="0 0 24 24"><g fill="none" stroke="#93c5fd" stroke-width="2.2" stroke-linecap="round" stroke-linejoin="round"><path d="M16.023 9.348h4.992v-.001M2.985 19.644v-4.992m0 0h4.992m-4.993 0 3.181 3.183a8.25 8.25 0 0 0 13.803-3.7M4.031 9.865a8.25 8.25 0 0 1 13.803-3.7l3.181 3.182m0-4.991v4.99"/></g></svg>
<div class="t" style="left:1886.74px;top:566.00px;font-size:19px;line-height:19px;color:#93c5fd;font-weight:normal;font-family:'Liberation Sans', sans-serif;-webkit-text-stroke:0.49px #93c5fd;transform:scaleX(0.9837);transform-origin:0 0;">Reset</div>
<div class="a" style="left:50px;top:639.7px;width:1921px;height:600px;border:1.5px solid #3c4554;border-radius:11px;box-sizing:border-box;overflow:hidden;background:#1f2937;"><div style="position:absolute;left:0;top:0;right:0;height:37.09999999999991px;background:#2a3444;border-bottom:1.5px solid #465062;"></div></div>
<div class="t" style="left:88.42px;top:650.00px;font-size:19px;line-height:19px;color:#d1d5db;font-weight:normal;font-family:'Liberation Sans', sans-serif;letter-spacing:2.0px;-webkit-text-stroke:0.49px #d1d5db;transform:scaleX(0.9140);transform-origin:0 0;">NAME</div>
<div class="t" style="left:381.71px;top:650.00px;font-size:19px;line-height:19px;color:#d1d5db;font-weight:normal;font-family:'Liberation Sans', sans-serif;letter-spacing:2.0px;-webkit-text-stroke:0.49px #d1d5db;transform:scaleX(0.8607);transform-origin:0 0;">TYPE</div>
<div class="t" style="left:476.82px;top:650.00px;font-size:19px;line-height:19px;color:#d1d5db;font-weight:normal;font-family:'Liberation Sans', sans-serif;letter-spacing:2.0px;-webkit-text-stroke:0.49px #d1d5db;transform:scaleX(0.9076);transform-origin:0 0;">VMID</div>
<div class="t" style="left:587.22px;top:650.00px;font-size:19px;line-height:19px;color:#d1d5db;font-weight:normal;font-family:'Liberation Sans', sans-serif;letter-spacing:2.0px;-webkit-text-stroke:0.49px #d1d5db;transform:scaleX(0.8995);transform-origin:0 0;">UPTIME</div>
<div class="t" style="left:745.72px;top:650.00px;font-size:19px;line-height:19px;color:#d1d5db;font-weight:normal;font-family:'Liberation Sans', sans-serif;letter-spacing:2.0px;-webkit-text-stroke:0.49px #d1d5db;transform:scaleX(0.8991);transform-origin:0 0;">CPU</div>
<div class="t" style="left:967.52px;top:650.00px;font-size:19px;line-height:19px;color:#d1d5db;font-weight:normal;font-family:'Liberation Sans', sans-serif;letter-spacing:2.0px;-webkit-text-stroke:0.49px #d1d5db;transform:scaleX(0.8981);transform-origin:0 0;">MEMORY</div>
<div class="t" style="left:1189.72px;top:650.00px;font-size:19px;line-height:19px;color:#d1d5db;font-weight:normal;font-family:'Liberation Sans', sans-serif;letter-spacing:2.0px;-webkit-text-stroke:0.49px #d1d5db;transform:scaleX(0.8872);transform-origin:0 0;">DISK</div>
<div class="t" style="left:1412.01px;top:650.00px;font-size:19px;line-height:19px;color:#d1d5db;font-weight:normal;font-family:'Liberation Sans', sans-serif;letter-spacing:2.0px;-webkit-text-stroke:0.49px #d1d5db;transform:scaleX(0.8747);transform-origin:0 0;">DISK READ</div>
<div class="t" style="left:1554.42px;top:650.00px;font-size:19px;line-height:19px;color:#d1d5db;font-weight:normal;font-family:'Liberation Sans', sans-serif;letter-spacing:2.0px;-webkit-text-stroke:0.49px #d1d5db;transform:scaleX(0.8814);transform-origin:0 0;">DISK WRITE</div>
<div class="t" style="left:1697.02px;top:650.00px;font-size:19px;line-height:19px;color:#d1d5db;font-weight:normal;font-family:'Liberation Sans', sans-serif;letter-spacing:2.0px;-webkit-text-stroke:0.49px #d1d5db;transform:scaleX(0.8891);transform-origin:0 0;">NET IN</div>
<div class="t" style="left:1839.92px;top:650.00px;font-size:19px;line-height:19px;color:#d1d5db;font-weight:normal;font-family:'Liberation Sans', sans-serif;letter-spacing:2.0px;-webkit-text-stroke:0.49px #d1d5db;transform:scaleX(0.8939);transform-origin:0 0;">NET OUT</div>
<svg class="a" style="left:533.50px;top:653.00px;" width="13.00" height="13.00" viewBox="0 0 13 13"><path d="M6.5 0.5 L12.5 12.5 H0.5 Z" fill="#d1d5db"/></svg>
<div class="a" style="left:70.20px;top:685.70px;width:1880.10px;height:50.70px;background:#111827;border:1.5px solid #3c4554;box-sizing:border-box;border-radius:11px;"></div>
<div class="a" style="left:89.00px;top:704.80px;width:13.00px;height:13.00px;border-radius:50%;background:#22c55e;"></div>
<div class="t" style="left:120.60px;top:701.00px;font-size:23px;line-height:23px;color:#f9fafb;font-weight:bold;font-family:'Liberation Sans', sans-serif;transform:scaleX(0.9806);transform-origin:0 0;">pve1</div>
<div class="a" style="left:191.00px;top:696.20px;width:124.50px;height:29.70px;background:rgba(30,58,138,0.5);border-radius:7px;"></div>
<div class="t" style="left:204.22px;top:702.00px;font-size:17.4px;line-height:17.4px;color:#93c5fd;font-weight:normal;font-family:'Liberation Sans', sans-serif;-webkit-text-stroke:0.45px #93c5fd;transform:scaleX(0.9942);transform-origin:0 0;">mock-cluster</div>
<div class="a" style="left:51.00px;top:743.00px;width:1919.00px;height:2.00px;background:#38414f;"></div>
<div class="a" style="left:63.00px;top:753.70px;width:13.00px;height:13.00px;border-radius:50%;background:#22c55e;"></div>
<div class="t" style="left:88.76px;top:756.00px;font-size:22.5px;line-height:22.5px;color:#f3f4f6;font-weight:normal;font-family:'Liberation Sans', sans-serif;-webkit-text-stroke:0.49px #f3f4f6;transform:scaleX(1.0639);transform-origin:0 0;">vm-influxdb-36</div>
<div class="a" style="left:270.95px;top:759.75px;width:12.5px;height:12.5px;border-radius:50%;background:#9e5631;clip-path:inset(0 0.00px 0 0);"></div>
<div class="a" style="left:289.45px;top:759.75px;width:12.5px;height:12.5px;border-radius:50%;background:#957e2c;clip-path:inset(0 0.00px 0 0);"></div>
<div class="a" style="left:381.00px;top:753.40px;width:46.00px;height:30.30px;background:rgba(30,64,175,0.40);border-radius:6px;"></div>
<div class="t" style="left:390.35px;top:760.00px;font-size:19px;line-height:19px;color:#93c5fd;font-weight:normal;font-family:'Liberation Sans', sans-serif;-webkit-text-stroke:0.42px #93c5fd;transform:scaleX(0.9578);transform-origin:0 0;">VM</div>
<div class="t" style="left:476.82px;top:757.00px;font-size:21.5px;line-height:21.5px;color:#9ca3af;font-weight:normal;font-family:'Liberation Sans', sans-serif;-webkit-text-stroke:0.47px #9ca3af;transform:scaleX(0.9276);transform-origin:0 0;">102</div>
<div class="t" style="left:587.83px;top:756.00px;font-size:21px;line-height:21px;color:#9ca3af;font-weight:normal;font-family:'Liberation Sans', sans-serif;-webkit-text-stroke:0.46px #9ca3af;transform:scaleX(1.0139);transform-origin:0 0;">5d 16h</div>
<div class="a" style="left:745.00px;top:755.40px;width:197.10px;height:21.30px;background:#4b5563;border-radius:5px;overflow:hidden;"><div style="width:17%;height:100%;background:#3e955d;"></div></div>
<div class="t" style="left:778.23px;top:759.00px;font-size:16px;line-height:16px;color:#f3f4f6;font-weight:normal;font-family:'Liberation Sans', sans-serif;-webkit-text-stroke:0.35px #f3f4f6;transform:scaleX(1.0344);transform-origin:0 0;">17% (0.3/2 cores)</div>
<div class="a" style="left:967.00px;top:755.40px;width:197.10px;height:21.30px;background:#4b5563;border-radius:5px;overflow:hidden;"><div style="width:47%;height:100%;background:#3e955d;"></div></div>
<div class="t" style="left:982.70px;top:759.00px;font-size:16px;line-height:16px;color:#f3f4f6;font-weight:normal;font-family:'Liberation Sans', sans-serif;-webkit-text-stroke:0.35px #f3f4f6;transform:scaleX(1.0350);transform-origin:0 0;">47% (6.6 GB/14.0 GB)</div>
<div class="a" style="left:1189.00px;top:755.40px;width:197.10px;height:21.30px;background:#4b5563;border-radius:5px;overflow:hidden;"><div style="width:66%;height:100%;background:#3e955d;"></div></div>
<div class="t" style="left:1190.86px;top:759.00px;font-size:16px;line-height:16px;color:#f3f4f6;font-weight:normal;font-family:'Liberation Sans', sans-serif;-webkit-text-stroke:0.35px #f3f4f6;transform:scaleX(1.0354);transform-origin:0 0;">66% (173.6 GB/265.0 GB)</div>
<div class="t" style="left:1411.90px;top:753.00px;font-size:23.5px;line-height:23.5px;color:#f87171;font-weight:normal;font-family:'Liberation Mono', monospace;transform:scaleX(0.9040);transform-origin:0 0;">79 MB/s</div>
<div class="t" style="left:1554.00px;top:753.00px;font-size:23.5px;line-height:23.5px;color:#9ca3af;font-weight:normal;font-family:'Liberation Mono', monospace;transform:scaleX(0.8986);transform-origin:0 0;">0 B/s</div>
<div class="t" style="left:1696.30px;top:753.00px;font-size:23.5px;line-height:23.5px;color:#9ca3af;font-weight:normal;font-family:'Liberation Mono', monospace;transform:scaleX(0.8986);transform-origin:0 0;">0 B/s</div>
<div class="t" style="left:1839.40px;top:753.00px;font-size:23.5px;line-height:23.5px;color:#facc15;font-weight:normal;font-family:'Liberation Mono', monospace;transform:scaleX(0.9040);transform-origin:0 0;">23 MB/s</div>
<div class="a" style="left:51.00px;top:787.40px;width:1919.00px;height:2.00px;background:#38414f;"></div>
<div class="a" style="left:63.00px;top:798.10px;width:13.00px;height:13.00px;border-radius:50%;background:#22c55e;"></div>
<div class="t" style="left:88.76px;top:801.00px;font-size:22.5px;line-height:22.5px;color:#f3f4f6;font-weight:normal;font-family:'Liberation Sans', sans-serif;-webkit-text-stroke:0.49px #f3f4f6;transform:scaleX(1.0409);transform-origin:0 0;">lxc-transmission-4</div>
<div class="a" style="left:302.65px;top:804.15px;width:12.5px;height:12.5px;border-radius:50%;background:#ae4a2c;clip-path:inset(0 0.00px 0 0);"></div>
<div class="a" style="left:381.00px;top:797.80px;width:53.40px;height:30.30px;background:rgba(22,101,52,0.38);border-radius:6px;"></div>
<div class="t" style="left:390.54px;top:804.00px;font-size:19px;line-height:19px;color:#86efac;font-weight:normal;font-family:'Liberation Sans', sans-serif;-webkit-text-stroke:0.42px #86efac;transform:scaleX(0.9284);transform-origin:0 0;">LXC</div>
<div class="t" style="left:476.82px;top:802.00px;font-size:21.5px;line-height:21.5px;color:#9ca3af;font-weight:normal;font-family:'Liberation Sans', sans-serif;-webkit-text-stroke:0.47px #9ca3af;transform:scaleX(0.9276);transform-origin:0 0;">105</div>
<div class="t" style="left:587.83px;top:801.00px;font-size:21px;line-height:21px;color:#9ca3af;font-weight:normal;font-family:'Liberation Sans', sans-serif;-webkit-text-stroke:0.46px #9ca3af;transform:scaleX(1.0123);transform-origin:0 0;">6d 3h</div>
<div class="a" style="left:745.00px;top:799.80px;width:197.10px;height:21.30px;background:#4b5563;border-radius:5px;overflow:hidden;"><div style="width:8%;height:100%;background:#3e955d;"></div></div>
<div class="t" style="left:782.85px;top:804.00px;font-size:16px;line-height:16px;color:#f3f4f6;font-weight:normal;font-family:'Liberation Sans', sans-serif;-webkit-text-stroke:0.35px #f3f4f6;transform:scaleX(1.0342);transform-origin:0 0;">8% (0.3/4 cores)</div>
<div class="a" style="left:967.00px;top:799.80px;width:197.10px;height:21.30px;background:#4b5563;border-radius:5px;overflow:hidden;"><div style="width:56%;height:100%;background:#3e955d;"></div></div>
<div class="t" style="left:987.32px;top:804.00px;font-size:16px;line-height:16px;color:#f3f4f6;font-weight:normal;font-family:'Liberation Sans', sans-serif;-webkit-text-stroke:0.35px #f3f4f6;transform:scaleX(1.0349);transform-origin:0 0;">56% (1.5 GB/2.6 GB)</div>
<div class="a" style="left:1189.00px;top:799.80px;width:197.10px;height:21.30px;background:#4b5563;border-radius:5px;overflow:hidden;"><div style="width:58%;height:100%;background:#3e955d;"></div></div>
<div class="t" style="left:1200.09px;top:804.00px;font-size:16px;line-height:16px;color:#f3f4f6;font-weight:normal;font-family:'Liberation Sans', sans-serif;-webkit-text-stroke:0.35px #f3f4f6;transform:scaleX(1.0352);transform-origin:0 0;">58% (48.1 GB/83.0 GB)</div>
<div class="t" style="left:1411.90px;top:797.00px;font-size:23.5px;line-height:23.5px;color:#9ca3af;font-weight:normal;font-family:'Liberation Mono', monospace;transform:scaleX(0.8986);transform-origin:0 0;">0 B/s</div>
<div class="t" style="left:1554.00px;top:797.00px;font-size:23.5px;line-height:23.5px;color:#9ca3af;font-weight:normal;font-family:'Liberation Mono', monospace;transform:scaleX(0.8986);transform-origin:0 0;">0 B/s</div>
<div class="t" style="left:1696.30px;top:797.00px;font-size:23.5px;line-height:23.5px;color:#9ca3af;font-weight:normal;font-family:'Liberation Mono', monospace;transform:scaleX(0.8986);transform-origin:0 0;">0 B/s</div>
<div class="t" style="left:1839.40px;top:797.00px;font-size:23.5px;line-height:23.5px;color:#9ca3af;font-weight:normal;font-family:'Liberation Mono', monospace;transform:scaleX(0.8986);transform-origin:0 0;">0 B/s</div>
<div class="a" style="left:51.00px;top:831.80px;width:1919.00px;height:2.00px;background:#38414f;"></div>
<div class="a" style="left:63.00px;top:842.50px;width:13.00px;height:13.00px;border-radius:50%;background:#22c55e;"></div>
<div class="t" style="left:88.75px;top:845.00px;font-size:22.5px;line-height:22.5px;color:#f3f4f6;font-weight:normal;font-family:'Liberation Sans', sans-serif;-webkit-text-stroke:0.49px #f3f4f6;transform:scaleX(1.0346);transform-origin:0 0;">lxc-homeassistant-9</div>
<div class="a" style="left:320.95px;top:848.55px;width:12.5px;height:12.5px;border-radius:50%;background:#2d944c;clip-path:inset(0 0.00px 0 0);"></div>
<div class="a" style="left:339.45px;top:848.55px;width:12.5px;height:12.5px;border-radius:50%;background:#ae4a2c;clip-path:inset(0 0.00px 0 0);"></div>
<div class="a" style="left:357.95px;top:848.55px;width:12.5px;height:12.5px;border-radius:50%;background:#957e2c;clip-path:inset(0 0.95px 0 0);"></div>
<div class="a" style="left:381.00px;top:842.20px;width:53.40px;height:30.30px;background:rgba(22,101,52,0.38);border-radius:6px;"></div>
<div class="t" style="left:390.54px;top:848.00px;font-size:19px;line-height:19px;color:#86efac;font-weight:normal;font-family:'Liberation Sans', sans-serif;-webkit-text-stroke:0.42px #86efac;transform:scaleX(0.9284);transform-origin:0 0;">LXC</div>
<div class="t" style="left:476.82px;top:846.00px;font-size:21.5px;line-height:21.5px;color:#9ca3af;font-weight:normal;font-family:'Liberation Sans', sans-serif;-webkit-text-stroke:0.47px #9ca3af;transform:scaleX(0.9276);transform-origin:0 0;">106</div>
<div class="t" style="left:587.83px;top:845.00px;font-size:21px;line-height:21px;color:#9ca3af;font-weight:normal;font-family:'Liberation Sans', sans-serif;-webkit-text-stroke:0.46px #9ca3af;transform:scaleX(1.0150);transform-origin:0 0;">55d 21h</div>
<div class="a" style="left:745.00px;top:844.20px;width:197.10px;height:21.30px;background:#4b5563;border-radius:5px;overflow:hidden;"><div style="width:9%;height:100%;background:#3e955d;"></div></div>
<div class="t" style="left:782.85px;top:848.00px;font-size:16px;line-height:16px;color:#f3f4f6;font-weight:normal;font-family:'Liberation Sans', sans-serif;-webkit-text-stroke:0.35px #f3f4f6;transform:scaleX(1.0342);transform-origin:0 0;">9% (0.1/1 cores)</div>
<div class="a" style="left:967.00px;top:844.20px;width:197.10px;height:21.30px;background:#4b5563;border-radius:5px;overflow:hidden;"><div style="width:55%;height:100%;background:#3e955d;"></div></div>
<div class="t" style="left:987.32px;top:848.00px;font-size:16px;line-height:16px;color:#f3f4f6;font-weight:normal;font-family:'Liberation Sans', sans-serif;-webkit-text-stroke:0.35px #f3f4f6;transform:scaleX(1.0349);transform-origin:0 0;">55% (1.7 GB/3.2 GB)</div>
<div class="a" style="left:1189.00px;top:844.20px;width:197.10px;height:21.30px;background:#4b5563;border-radius:5px;overflow:hidden;"><div style="width:36%;height:100%;background:#3e955d;"></div></div>
<div class="t" style="left:1196.09px;top:848.00px;font-size:16px;line-height:16px;color:#f3f4f6;font-weight:normal;font-family:'Liberation Sans', sans-serif;-webkit-text-stroke:0.35px #f3f4f6;transform:scaleX(1.0353);transform-origin:0 0;">36% (39.4 GB/110.0 GB)</div>
<div class="t" style="left:1411.90px;top:842.00px;font-size:23.5px;line-height:23.5px;color:#9ca3af;font-weight:normal;font-family:'Liberation Mono', monospace;transform:scaleX(0.8986);transform-origin:0 0;">0 B/s</div>
<div class="t" style="left:1554.00px;top:842.00px;font-size:23.5px;line-height:23.5px;color:#9ca3af;font-weight:normal;font-family:'Liberation Mono', monospace;transform:scaleX(0.8986);transform-origin:0 0;">0 B/s</div>
<div class="t" style="left:1696.30px;top:842.00px;font-size:23.5px;line-height:23.5px;color:#9ca3af;font-weight:normal;font-family:'Liberation Mono', monospace;transform:scaleX(0.8986);transform-origin:0 0;">0 B/s</div>
<div class="t" style="left:1839.40px;top:842.00px;font-size:23.5px;line-height:23.5px;color:#9ca3af;font-weight:normal;font-family:'Liberation Mono', monospace;transform:scaleX(0.8986);transform-origin:0 0;">0 B/s</div>
<div class="a" style="left:51.00px;top:876.20px;width:1919.00px;height:2.00px;background:#38414f;"></div>
<div class="a" style="left:63.00px;top:886.90px;width:13.00px;height:13.00px;border-radius:50%;background:#22c55e;"></div>
<div class="t" style="left:88.76px;top:889.00px;font-size:22.5px;line-height:22.5px;color:#f3f4f6;font-weight:normal;font-family:'Liberation Sans', sans-serif;-webkit-text-stroke:0.49px #f3f4f6;transform:scaleX(1.0551);transform-origin:0 0;">lxc-plex-50</div>
<div class="a" style="left:381.00px;top:886.60px;width:53.40px;height:30.30px;background:rgba(22,101,52,0.38);border-radius:6px;"></div>
<div class="t" style="left:390.54px;top:893.00px;font-size:19px;line-height:19px;color:#86efac;font-weight:normal;font-family:'Liberation Sans', sans-serif;-webkit-text-stroke:0.42px #86efac;transform:scaleX(0.9284);transform-origin:0 0;">LXC</div>
<div class="t" style="left:476.82px;top:890.00px;font-size:21.5px;line-height:21.5px;color:#9ca3af;font-weight:normal;font-family:'Liberation Sans', sans-serif;-webkit-text-stroke:0.47px #9ca3af;transform:scaleX(0.9276);transform-origin:0 0;">107</div>
<div class="t" style="left:587.83px;top:889.00px;font-size:21px;line-height:21px;color:#9ca3af;font-weight:normal;font-family:'Liberation Sans', sans-serif;-webkit-text-stroke:0.46px #9ca3af;transform:scaleX(1.0149);transform-origin:0 0;">37d 11h</div>
<div class="a" style="left:745.00px;top:888.60px;width:197.10px;height:21.30px;background:#4b5563;border-radius:5px;overflow:hidden;"><div style="width:6%;height:100%;background:#3e955d;"></div></div>
<div class="t" style="left:782.85px;top:893.00px;font-size:16px;line-height:16px;color:#f3f4f6;font-weight:normal;font-family:'Liberation Sans', sans-serif;-webkit-text-stroke:0.35px #f3f4f6;transform:scaleX(1.0342);transform-origin:0 0;">6% (0.2/3 cores)</div>
<div class="a" style="left:967.00px;top:888.60px;width:197.10px;height:21.30px;background:#4b5563;border-radius:5px;overflow:hidden;"><div style="width:55%;height:100%;background:#3e955d;"></div></div>
<div class="t" style="left:987.32px;top:893.00px;font-size:16px;line-height:16px;color:#f3f4f6;font-weight:normal;font-family:'Liberation Sans', sans-serif;-webkit-text-stroke:0.35px #f3f4f6;transform:scaleX(1.0349);transform-origin:0 0;">55% (1.7 GB/3.0 GB)</div>
<div class="a" style="left:1189.00px;top:888.60px;width:197.10px;height:21.30px;background:#4b5563;border-radius:5px;overflow:hidden;"><div style="width:43%;height:100%;background:#3e955d;"></div></div>
<div class="t" style="left:1200.70px;top:893.00px;font-size:16px;line-height:16px;color:#f3f4f6;font-weight:normal;font-family:'Liberation Sans', sans-serif;-webkit-text-stroke:0.35px #f3f4f6;transform:scaleX(1.0352);transform-origin:0 0;">43% (11.5 GB/27.0 GB)</div>
<div class="t" style="left:1411.90px;top:886.00px;font-size:23.5px;line-height:23.5px;color:#9ca3af;font-weight:normal;font-family:'Liberation Mono', monospace;transform:scaleX(0.8986);transform-origin:0 0;">0 B/s</div>
<div class="t" style="left:1554.00px;top:886.00px;font-size:23.5px;line-height:23.5px;color:#4ade80;font-weight:normal;font-family:'Liberation Mono', monospace;transform:scaleX(0.9016);transform-origin:0 0;">1 MB/s</div>
<div class="t" style="left:1696.30px;top:886.00px;font-size:23.5px;line-height:23.5px;color:#9ca3af;font-weight:normal;font-family:'Liberation Mono', monospace;transform:scaleX(0.9058);transform-origin:0 0;">512 KB/s</div>
<div class="t" style="left:1839.40px;top:886.00px;font-size:23.5px;line-height:23.5px;color:#9ca3af;font-weight:normal;font-family:'Liberation Mono', monospace;transform:scaleX(0.8986);transform-origin:0 0;">0 B/s</div>
<div class="a" style="left:51.00px;top:920.60px;width:1919.00px;height:2.00px;background:#38414f;"></div>
<div class="a" style="left:63.00px;top:931.30px;width:13.00px;height:13.00px;border-radius:50%;background:#22c55e;"></div>
<div class="t" style="left:88.76px;top:934.00px;font-size:22.5px;line-height:22.5px;color:#f3f4f6;font-weight:normal;font-family:'Liberation Sans', sans-serif;-webkit-text-stroke:0.49px #f3f4f6;transform:scaleX(1.0551);transform-origin:0 0;">lxc-plex-85</div>
<div class="a" style="left:228.75px;top:937.35px;width:12.5px;height:12.5px;border-radius:50%;background:#b5353a;clip-path:inset(0 0.00px 0 0);"></div>
<div class="a" style="left:381.00px;top:931.00px;width:53.40px;height:30.30px;background:rgba(22,101,52,0.38);border-radius:6px;"></div>
<div class="t" style="left:390.54px;top:937.00px;font-size:19px;line-height:19px;color:#86efac;font-weight:normal;font-family:'Liberation Sans', sans-serif;-webkit-text-stroke:0.42px #86efac;transform:scaleX(0.9284);transform-origin:0 0;">LXC</div>
<div class="t" style="left:476.82px;top:935.00px;font-size:21.5px;line-height:21.5px;color:#9ca3af;font-weight:normal;font-family:'Liberation Sans', sans-serif;-webkit-text-stroke:0.47px #9ca3af;transform:scaleX(0.9276);transform-origin:0 0;">109</div>
<div class="t" style="left:587.83px;top:934.00px;font-size:21px;line-height:21px;color:#9ca3af;font-weight:normal;font-family:'Liberation Sans', sans-serif;-webkit-text-stroke:0.46px #9ca3af;transform:scaleX(1.0123);transform-origin:0 0;">9d 0h</div>
<div class="a" style="left:745.00px;top:933.00px;width:197.10px;height:21.30px;background:#4b5563;border-radius:5px;overflow:hidden;"><div style="width:6%;height:100%;background:#3e955d;"></div></div>
<div class="t" style="left:782.85px;top:937.00px;font-size:16px;line-height:16px;color:#f3f4f6;font-weight:normal;font-family:'Liberation Sans', sans-serif;-webkit-text-stroke:0.35px #f3f4f6;transform:scaleX(1.0342);transform-origin:0 0;">6% (0.1/2 cores)</div>
<div class="a" style="left:967.00px;top:933.00px;width:197.10px;height:21.30px;background:#4b5563;border-radius:5px;overflow:hidden;"><div style="width:55%;height:100%;background:#3e955d;"></div></div>
<div class="t" style="left:987.32px;top:937.00px;font-size:16px;line-height:16px;color:#f3f4f6;font-weight:normal;font-family:'Liberation Sans', sans-serif;-webkit-text-stroke:0.35px #f3f4f6;transform:scaleX(1.0349);transform-origin:0 0;">55% (1.1 GB/2.1 GB)</div>
<div class="a" style="left:1189.00px;top:933.00px;width:197.10px;height:21.30px;background:#4b5563;border-radius:5px;overflow:hidden;"><div style="width:24%;height:100%;background:#3e955d;"></div></div>
<div class="t" style="left:1200.09px;top:937.00px;font-size:16px;line-height:16px;color:#f3f4f6;font-weight:normal;font-family:'Liberation Sans', sans-serif;-webkit-text-stroke:0.35px #f3f4f6;transform:scaleX(1.0352);transform-origin:0 0;">24% (19.3 GB/81.0 GB)</div>
<div class="t" style="left:1411.90px;top:930.00px;font-size:23.5px;line-height:23.5px;color:#9ca3af;font-weight:normal;font-family:'Liberation Mono', monospace;transform:scaleX(0.8986);transform-origin:0 0;">0 B/s</div>
<div class="t" style="left:1554.00px;top:930.00px;font-size:23.5px;line-height:23.5px;color:#9ca3af;font-weight:normal;font-family:'Liberation Mono', monospace;transform:scaleX(0.8986);transform-origin:0 0;">0 B/s</div>
<div class="t" style="left:1696.30px;top:930.00px;font-size:23.5px;line-height:23.5px;color:#9ca3af;font-weight:normal;font-family:'Liberation Mono', monospace;transform:scaleX(0.8986);transform-origin:0 0;">0 B/s</div>
<div class="t" style="left:1839.40px;top:930.00px;font-size:23.5px;line-height:23.5px;color:#4ade80;font-weight:normal;font-family:'Liberation Mono', monospace;transform:scaleX(0.9016);transform-origin:0 0;">7 MB/s</div>
<div class="a" style="left:51.00px;top:965.00px;width:1919.00px;height:2.00px;background:#38414f;"></div>
<div class="a" style="left:63.00px;top:975.70px;width:13.00px;height:13.00px;border-radius:50%;background:#22c55e;"></div>
<div class="t" style="left:88.76px;top:978.00px;font-size:22.5px;line-height:22.5px;color:#f3f4f6;font-weight:normal;font-family:'Liberation Sans', sans-serif;-webkit-text-stroke:0.49px #f3f4f6;transform:scaleX(1.0573);transform-origin:0 0;">lxc-docker-90</div>
<div class="a" style="left:381.00px;top:975.40px;width:53.40px;height:30.30px;background:rgba(22,101,52,0.38);border-radius:6px;"></div>
<div class="t" style="left:390.54px;top:982.00px;font-size:19px;line-height:19px;color:#86efac;font-weight:normal;font-family:'Liberation Sans', sans-serif;-webkit-text-stroke:0.42px #86efac;transform:scaleX(0.9284);transform-origin:0 0;">LXC</div>
<div class="t" style="left:476.82px;top:979.00px;font-size:21.5px;line-height:21.5px;color:#9ca3af;font-weight:normal;font-family:'Liberation Sans', sans-serif;-webkit-text-stroke:0.47px #9ca3af;transform:scaleX(0.9270);transform-origin:0 0;">110</div>
<div class="t" style="left:587.83px;top:978.00px;font-size:21px;line-height:21px;color:#9ca3af;font-weight:normal;font-family:'Liberation Sans', sans-serif;-webkit-text-stroke:0.46px #9ca3af;transform:scaleX(1.0139);transform-origin:0 0;">35d 1h</div>
<div class="a" style="left:745.00px;top:977.40px;width:197.10px;height:21.30px;background:#4b5563;border-radius:5px;overflow:hidden;"><div style="width:10%;height:100%;background:#3e955d;"></div></div>
<div class="t" style="left:778.23px;top:981.00px;font-size:16px;line-height:16px;color:#f3f4f6;font-weight:normal;font-family:'Liberation Sans', sans-serif;-webkit-text-stroke:0.35px #f3f4f6;transform:scaleX(1.0344);transform-origin:0 0;">10% (0.4/4 cores)</div>
<div class="a" style="left:967.00px;top:977.40px;width:197.10px;height:21.30px;background:#4b5563;border-radius:5px;overflow:hidden;"><div style="width:54%;height:100%;background:#3e955d;"></div></div>
<div class="t" style="left:987.32px;top:981.00px;font-size:16px;line-height:16px;color:#f3f4f6;font-weight:normal;font-family:'Liberation Sans', sans-serif;-webkit-text-stroke:0.35px #f3f4f6;transform:scaleX(1.0349);transform-origin:0 0;">54% (2.5 GB/4.7 GB)</div>
<div class="a" style="left:1189.00px;top:977.40px;width:197.10px;height:21.30px;background:#4b5563;border-radius:5px;overflow:hidden;"><div style="width:69%;height:100%;background:#3e955d;"></div></div>
<div class="t" style="left:1200.09px;top:981.00px;font-size:16px;line-height:16px;color:#f3f4f6;font-weight:normal;font-family:'Liberation Sans', sans-serif;-webkit-text-stroke:0.35px #f3f4f6;transform:scaleX(1.0352);transform-origin:0 0;">69% (38.0 GB/55.0 GB)</div>
<div class="t" style="left:1411.90px;top:975.00px;font-size:23.5px;line-height:23.5px;color:#9ca3af;font-weight:normal;font-family:'Liberation Mono', monospace;transform:scaleX(0.8986);transform-origin:0 0;">0 B/s</div>
<div class="t" style="left:1554.00px;top:975.00px;font-size:23.5px;line-height:23.5px;color:#9ca3af;font-weight:normal;font-family:'Liberation Mono', monospace;transform:scaleX(0.8986);transform-origin:0 0;">0 B/s</div>
<div class="t" style="left:1696.30px;top:975.00px;font-size:23.5px;line-height:23.5px;color:#9ca3af;font-weight:normal;font-family:'Liberation Mono', monospace;transform:scaleX(0.8986);transform-origin:0 0;">0 B/s</div>
<div class="t" style="left:1839.40px;top:975.00px;font-size:23.5px;line-height:23.5px;color:#9ca3af;font-weight:normal;font-family:'Liberation Mono', monospace;transform:scaleX(0.8986);transform-origin:0 0;">0 B/s</div>
<div class="a" style="left:51.00px;top:1009.40px;width:1919.00px;height:2.00px;background:#38414f;"></div>
<div class="a" style="left:70.20px;top:1017.80px;width:1880.10px;height:50.70px;background:#111827;border:1.5px solid #3c4554;box-sizing:border-box;border-radius:11px;"></div>
<div class="a" style="left:89.00px;top:1036.90px;width:13.00px;height:13.00px;border-radius:50%;background:#22c55e;"></div>
<div class="t" style="left:120.60px;top:1033.00px;font-size:23px;line-height:23px;color:#f9fafb;font-weight:bold;font-family:'Liberation Sans', sans-serif;transform:scaleX(1.0588);transform-origin:0 0;">pve2</div>
<div class="a" style="left:195.10px;top:1028.30px;width:124.50px;height:29.70px;background:rgba(30,58,138,0.5);border-radius:7px;"></div>
<div class="t" style="left:208.32px;top:1035.00px;font-size:17.4px;line-height:17.4px;color:#93c5fd;font-weight:normal;font-family:'Liberation Sans', sans-serif;-webkit-text-stroke:0.45px #93c5fd;transform:scaleX(0.9942);transform-origin:0 0;">mock-cluster</div>
<div class="a" style="left:51.00px;top:1075.10px;width:1919.00px;height:2.00px;background:#38414f;"></div>
<div class="a" style="left:63.00px;top:1085.80px;width:13.00px;height:13.00px;border-radius:50%;background:#22c55e;"></div>
<div class="t" style="left:88.75px;top:1088.00px;font-size:22.5px;line-height:22.5px;color:#f3f4f6;font-weight:normal;font-family:'Liberation Sans', sans-serif;-webkit-text-stroke:0.49px #f3f4f6;transform:scaleX(1.0271);transform-origin:0 0;">vm-webserver-72</div>
<div class="a" style="left:292.45px;top:1091.85px;width:12.5px;height:12.5px;border-radius:50%;background:#8a3299;clip-path:inset(0 0.00px 0 0);"></div>
<div class="a" style="left:310.95px;top:1091.85px;width:12.5px;height:12.5px;border-radius:50%;background:#8a4519;clip-path:inset(0 0.00px 0 0);"></div>
<div class="a" style="left:329.45px;top:1091.85px;width:12.5px;height:12.5px;border-radius:50%;background:#2d944c;clip-path:inset(0 0.00px 0 0);"></div>
<div class="a" style="left:381.00px;top:1085.50px;width:46.00px;height:30.30px;background:rgba(30,64,175,0.40);border-radius:6px;"></div>
<div class="t" style="left:390.35px;top:1092.00px;font-size:19px;line-height:19px;color:#93c5fd;font-weight:normal;font-family:'Liberation Sans', sans-serif;-webkit-text-stroke:0.42px #93c5fd;transform:scaleX(0.9578);transform-origin:0 0;">VM</div>
<div class="t" style="left:476.82px;top:1089.00px;font-size:21.5px;line-height:21.5px;color:#9ca3af;font-weight:normal;font-family:'Liberation Sans', sans-serif;-webkit-text-stroke:0.47px #9ca3af;transform:scaleX(0.9264);transform-origin:0 0;">111</div>
<div class="t" style="left:587.83px;top:1088.00px;font-size:21px;line-height:21px;color:#9ca3af;font-weight:normal;font-family:'Liberation Sans', sans-serif;-webkit-text-stroke:0.46px #9ca3af;transform:scaleX(1.0139);transform-origin:0 0;">3d 14h</div>
<div class="a" style="left:745.00px;top:1087.50px;width:197.10px;height:21.30px;background:#4b5563;border-radius:5px;overflow:hidden;"><div style="width:17%;height:100%;background:#3e955d;"></div></div>
<div class="t" style="left:778.23px;top:1092.00px;font-size:16px;line-height:16px;color:#f3f4f6;font-weight:normal;font-family:'Liberation Sans', sans-serif;-webkit-text-stroke:0.35px #f3f4f6;transform:scaleX(1.0344);transform-origin:0 0;">17% (0.7/4 cores)</div>
<div class="a" style="left:967.00px;top:1087.50px;width:197.10px;height:21.30px;background:#4b5563;border-radius:5px;overflow:hidden;"><div style="width:49%;height:100%;background:#3e955d;"></div></div>
<div class="t" style="left:987.32px;top:1092.00px;font-size:16px;line-height:16px;color:#f3f4f6;font-weight:normal;font-family:'Liberation Sans', sans-serif;-webkit-text-stroke:0.35px #f3f4f6;transform:scaleX(1.0349);transform-origin:0 0;">49% (2.0 GB/4.0 GB)</div>
<div class="a" style="left:1189.00px;top:1087.50px;width:197.10px;height:21.30px;background:#4b5563;border-radius:5px;overflow:hidden;"><div style="width:51%;height:100%;background:#3e955d;"></div></div>
<div class="t" style="left:1190.86px;top:1092.00px;font-size:16px;line-height:16px;color:#f3f4f6;font-weight:normal;font-family:'Liberation Sans', sans-serif;-webkit-text-stroke:0.35px #f3f4f6;transform:scaleX(1.0354);transform-origin:0 0;">51% (355.7 GB/699.0 GB)</div>
<div class="t" style="left:1411.90px;top:1085.00px;font-size:23.5px;line-height:23.5px;color:#9ca3af;font-weight:normal;font-family:'Liberation Mono', monospace;transform:scaleX(0.8986);transform-origin:0 0;">0 B/s</div>
<div class="t" style="left:1554.00px;top:1085.00px;font-size:23.5px;line-height:23.5px;color:#9ca3af;font-weight:normal;font-family:'Liberation Mono', monospace;transform:scaleX(0.8986);transform-origin:0 0;">0 B/s</div>
<div class="t" style="left:1696.30px;top:1085.00px;font-size:23.5px;line-height:23.5px;color:#9ca3af;font-weight:normal;font-family:'Liberation Mono', monospace;transform:scaleX(0.8986);transform-origin:0 0;">0 B/s</div>
<div class="t" style="left:1839.40px;top:1085.00px;font-size:23.5px;line-height:23.5px;color:#9ca3af;font-weight:normal;font-family:'Liberation Mono', monospace;transform:scaleX(0.8986);transform-origin:0 0;">0 B/s</div>
<div class="a" style="left:51.00px;top:1119.50px;width:1919.00px;height:2.00px;background:#38414f;"></div>
<div class="a" style="left:63.00px;top:1130.20px;width:13.00px;height:13.00px;border-radius:50%;background:#22c55e;"></div>
<div class="t" style="left:88.77px;top:1133.00px;font-size:22.5px;line-height:22.5px;color:#f3f4f6;font-weight:normal;font-family:'Liberation Sans', sans-serif;-webkit-text-stroke:0.49px #f3f4f6;transform:scaleX(1.0856);transform-origin:0 0;">vm-fastapi-71</div>
<div class="a" style="left:261.95px;top:1136.25px;width:12.5px;height:12.5px;border-radius:50%;background:#8a3299;clip-path:inset(0 0.00px 0 0);"></div>
<div class="a" style="left:280.45px;top:1136.25px;width:12.5px;height:12.5px;border-radius:50%;background:#b5353a;clip-path:inset(0 0.00px 0 0);"></div>
<div class="a" style="left:298.95px;top:1136.25px;width:12.5px;height:12.5px;border-radius:50%;background:#2d944c;clip-path:inset(0 0.00px 0 0);"></div>
<div class="a" style="left:381.00px;top:1129.90px;width:46.00px;height:30.30px;background:rgba(30,64,175,0.40);border-radius:6px;"></div>
<div class="t" style="left:390.35px;top:1136.00px;font-size:19px;line-height:19px;color:#93c5fd;font-weight:normal;font-family:'Liberation Sans', sans-serif;-webkit-text-stroke:0.42px #93c5fd;transform:scaleX(0.9578);transform-origin:0 0;">VM</div>
<div class="t" style="left:476.82px;top:1134.00px;font-size:21.5px;line-height:21.5px;color:#9ca3af;font-weight:normal;font-family:'Liberation Sans', sans-serif;-webkit-text-stroke:0.47px #9ca3af;transform:scaleX(0.9270);transform-origin:0 0;">112</div>
<div class="t" style="left:587.83px;top:1133.00px;font-size:21px;line-height:21px;color:#9ca3af;font-weight:normal;font-family:'Liberation Sans', sans-serif;-webkit-text-stroke:0.46px #9ca3af;transform:scaleX(1.0123);transform-origin:0 0;">3d 1h</div>
<div class="a" style="left:745.00px;top:1131.90px;width:197.10px;height:21.30px;background:#4b5563;border-radius:5px;overflow:hidden;"><div style="width:18%;height:100%;background:#3e955d;"></div></div>
<div class="t" style="left:778.23px;top:1136.00px;font-size:16px;line-height:16px;color:#f3f4f6;font-weight:normal;font-family:'Liberation Sans', sans-serif;-webkit-text-stroke:0.35px #f3f4f6;transform:scaleX(1.0344);transform-origin:0 0;">18% (0.4/2 cores)</div>
<div class="a" style="left:967.00px;top:1131.90px;width:197.10px;height:21.30px;background:#4b5563;border-radius:5px;overflow:hidden;"><div style="width:45%;height:100%;background:#3e955d;"></div></div>
<div class="t" style="left:987.32px;top:1136.00px;font-size:16px;line-height:16px;color:#f3f4f6;font-weight:normal;font-family:'Liberation Sans', sans-serif;-webkit-text-stroke:0.35px #f3f4f6;transform:scaleX(1.0349);transform-origin:0 0;">45% (1.8 GB/4.0 GB)</div>
<div class="a" style="left:1189.00px;top:1131.90px;width:197.10px;height:21.30px;background:#4b5563;border-radius:5px;overflow:hidden;"><div style="width:58%;height:100%;background:#3e955d;"></div></div>
<div class="t" style="left:1190.86px;top:1136.00px;font-size:16px;line-height:16px;color:#f3f4f6;font-weight:normal;font-family:'Liberation Sans', sans-serif;-webkit-text-stroke:0.35px #f3f4f6;transform:scaleX(1.0354);transform-origin:0 0;">58% (305.4 GB/527.0 GB)</div>
<div class="t" style="left:1411.90px;top:1129.00px;font-size:23.5px;line-height:23.5px;color:#4ade80;font-weight:normal;font-family:'Liberation Mono', monospace;transform:scaleX(0.9016);transform-origin:0 0;">3 MB/s</div>
<div class="t" style="left:1554.00px;top:1129.00px;font-size:23.5px;line-height:23.5px;color:#4ade80;font-weight:normal;font-family:'Liberation Mono', monospace;transform:scaleX(0.9016);transform-origin:0 0;">6 MB/s</div>
<div class="t" style="left:1696.30px;top:1129.00px;font-size:23.5px;line-height:23.5px;color:#9ca3af;font-weight:normal;font-family:'Liberation Mono', monospace;transform:scaleX(0.8986);transform-origin:0 0;">0 B/s</div>
<div class="t" style="left:1839.40px;top:1129.00px;font-size:23.5px;line-height:23.5px;color:#9ca3af;font-weight:normal;font-family:'Liberation Mono', monospace;transform:scaleX(0.9058);transform-origin:0 0;">128 KB/s</div>
<div class="a" style="left:0.00px;top:1138.00px;width:1995.00px;height:7.00px;background:#0c0c0c;"></div>
</body></html>
